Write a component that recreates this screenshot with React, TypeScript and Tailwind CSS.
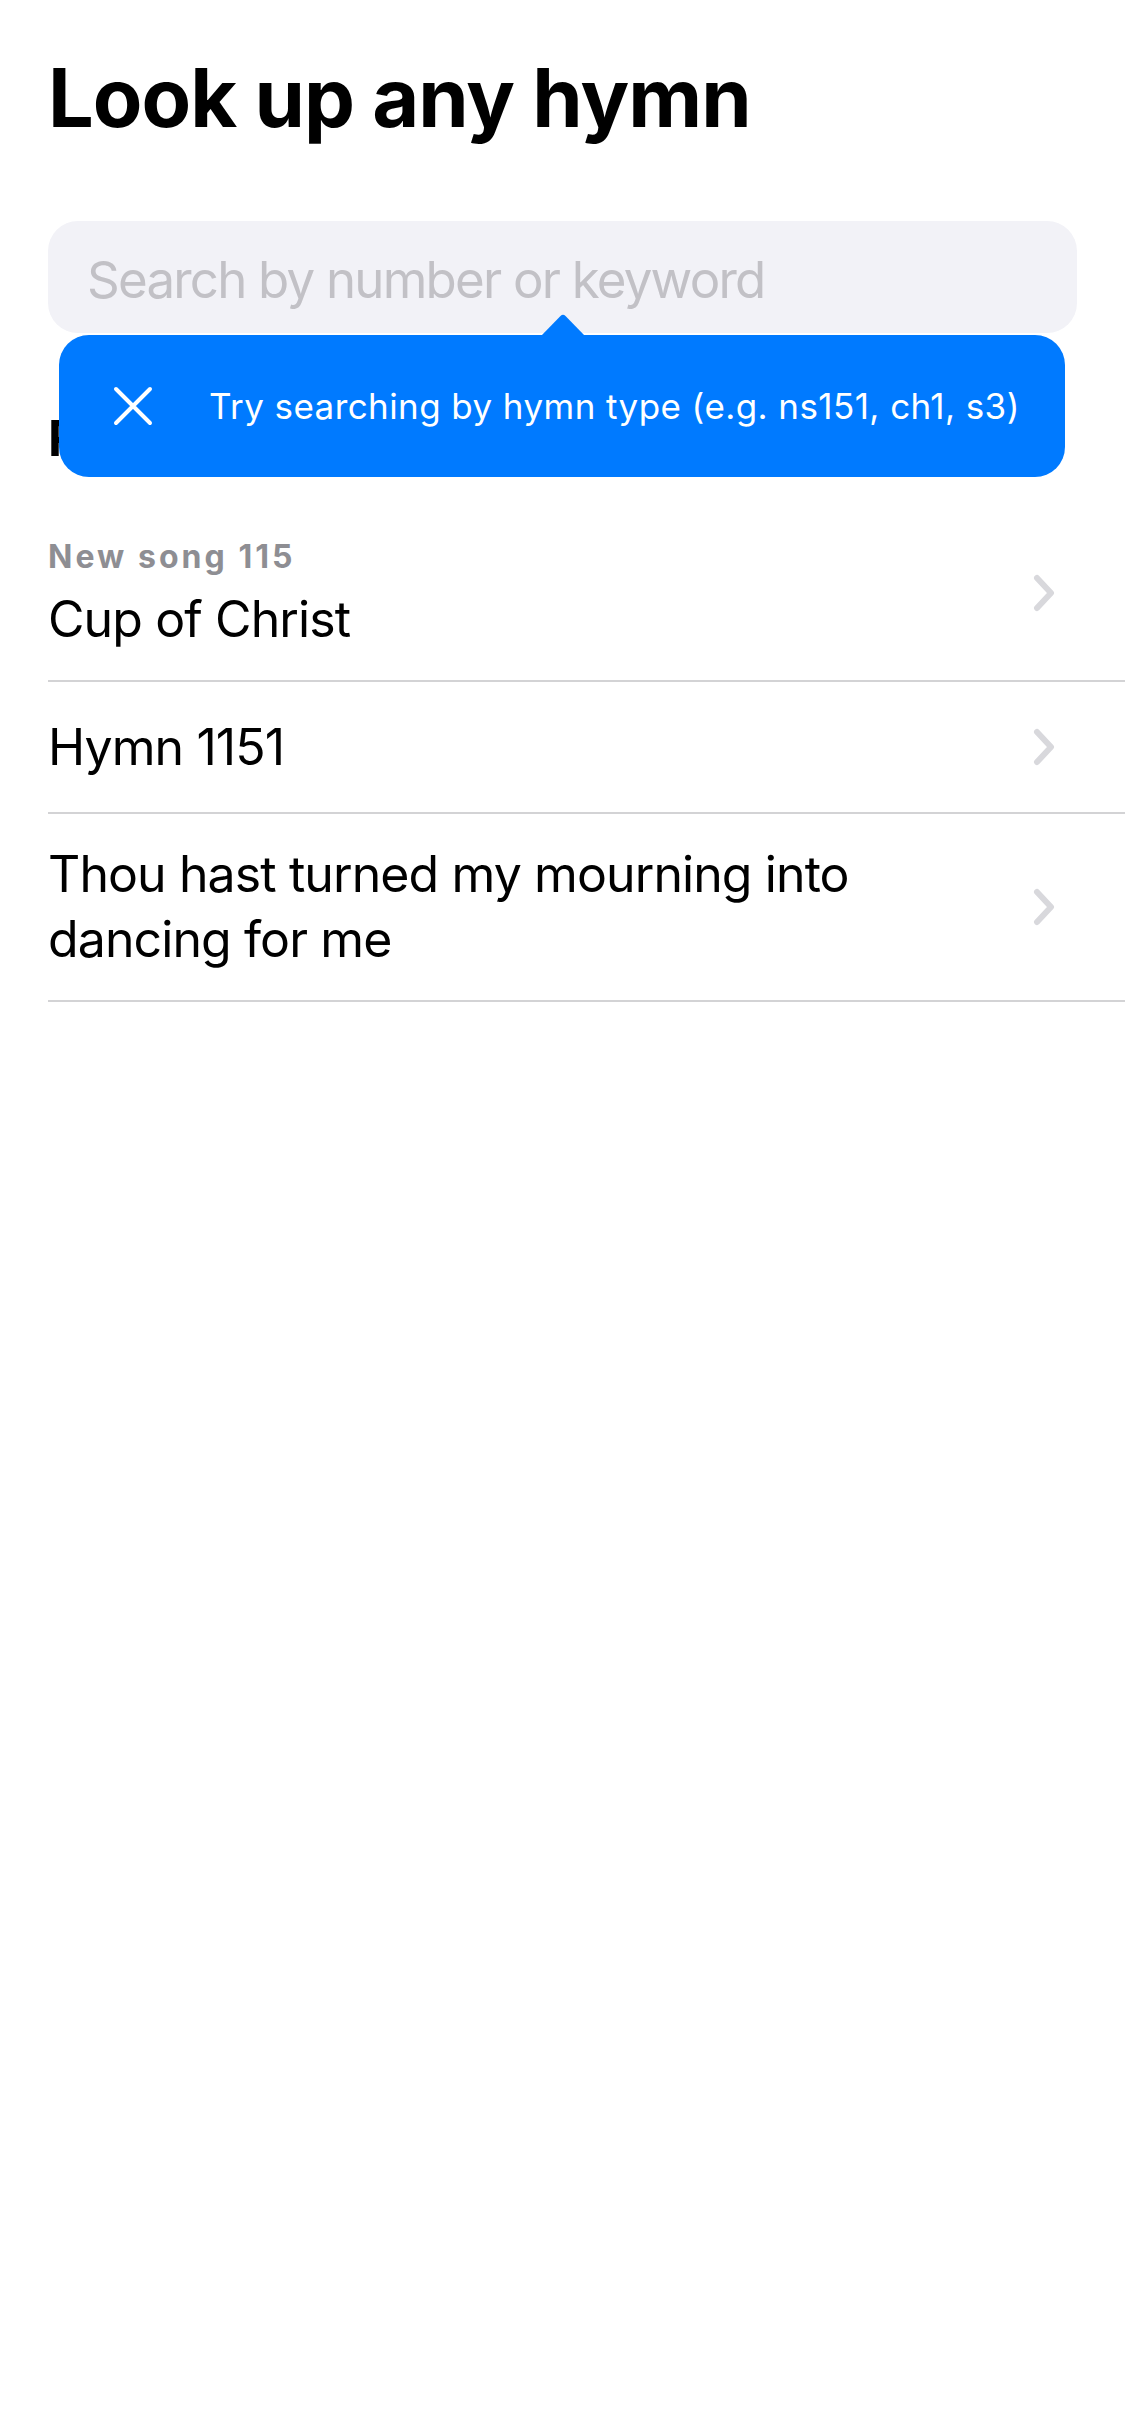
type Recent = {
    subtitle?: string;
    title: string;
};

const recents: Recent[] = [
    { subtitle: "New song 115", title: "Cup of Christ" },
    { title: "Hymn 1151" },
    { title: "Thou hast turned my mourning into dancing for me" },
];

const Chevron = () => (
    <svg width="22" height="38" viewBox="0 0 22 38" fill="none" className="shrink-0">
        <path d="M4 4 L18 19 L4 34" stroke="#d8d8dc" strokeWidth="6" strokeLinecap="round" strokeLinejoin="round" />
    </svg>
);

const App = () => {
    return (
        <div className="w-full min-h-screen bg-white font-['Inter','Liberation_Sans',sans-serif] text-black">
            <div className="pt-[58px]">
                {/* Title */}
                <h1 className="px-[48px] text-[81px] leading-[81px] font-bold tracking-[-0.012em]">Look up any hymn</h1>

                {/* Search */}
                <div className="relative mx-[48px] mt-[82px]">
                    <div className="h-[112px] rounded-[30px] bg-[#f2f2f7] pl-[39px] pr-[30px] pt-[4px]">
                        <input
                            type="text"
                            placeholder="Search by number or keyword"
                            className="w-full h-full bg-transparent outline-none text-[51px] tracking-[-0.035em] placeholder:text-[#c2c1c6]"
                        />
                    </div>

                    {/* Tooltip */}
                    <div className="absolute z-10 left-[11px] right-[12px] top-[114px] h-[142px] rounded-[30px] bg-[#007aff] flex items-center">
                        <svg
                            width="44"
                            height="22"
                            viewBox="0 0 44 22"
                            className="absolute -top-[21px] left-[482px]"
                        >
                            <path d="M0 22 L19.5 2 Q22 -0.5 24.5 2 L44 22 Z" fill="#007aff" />
                        </svg>
                        <button className="ml-[54px] w-[40px] h-[40px] flex items-center justify-center">
                            <svg width="40" height="40" viewBox="0 0 40 40" fill="none">
                                <path d="M3 3 L37 37 M37 3 L3 37" stroke="white" strokeWidth="4" strokeLinecap="round" />
                            </svg>
                        </button>
                        <p className="ml-[56px] text-white text-[35px] leading-[42px] tracking-[0.012em]">
                            Try searching by hymn type (e.g. ns151, ch1, s3)
                        </p>
                    </div>
                </div>

                {/* Recent searches */}
                <h2 className="px-[48px] mt-[75px] text-[50px] leading-[60px] font-bold">Recent searches</h2>

                <ul className="ml-[48px] mt-[38px]">
                    {recents.map((item, index) => (
                        <li
                            key={index}
                            className="min-h-[132px] flex items-center border-b-[2px] border-[#d3d3d5] pr-[70px] py-[28px]"
                        >
                            <div className="flex-1 pr-[60px]">
                                {item.subtitle && (
                                    <p className="mb-[8px] text-[32px] leading-[45px] font-bold text-[#8e8e93] tracking-[0.095em]">
                                        {item.subtitle}
                                    </p>
                                )}
                                <p className="text-[50px] leading-[65px] tracking-[-0.018em]">{item.title}</p>
                            </div>
                            <Chevron />
                        </li>
                    ))}
                </ul>
            </div>
        </div>
    );
};

export default App;
